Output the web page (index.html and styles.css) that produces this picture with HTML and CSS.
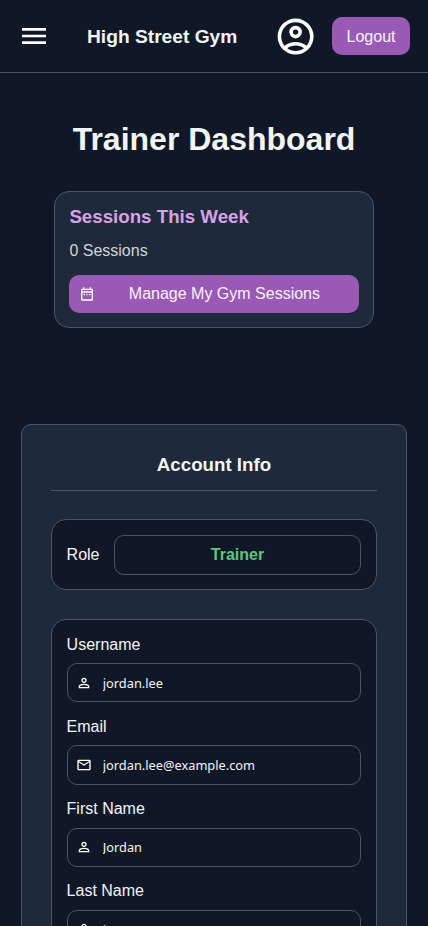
FILE: index.html
```html
<!DOCTYPE html>
<html lang="en">
<head>
<meta charset="utf-8">
<title>High Street Gym</title>
<link rel="stylesheet" href="styles.css">
</head>
<body>
<svg class="sprite" aria-hidden="true">
  <symbol id="person" viewBox="0 -960 960 960"><path d="M480-480q-66 0-113-47t-47-113q0-66 47-113t113-47q66 0 113 47t47 113q0 66-47 113t-113 47ZM160-160v-112q0-34 17.500-62.500T224-378q62-31 126-46.500T480-440q66 0 130 15.500T736-378q29 15 46.500 43.500T800-272v112H160Zm80-80h480v-32q0-11-5.500-20T700-306q-54-27-109-40.500T480-360q-56 0-111 13.500T260-306q-9 5-14.500 14t-5.500 20v32Zm240-320q33 0 56.500-23.500T560-640q0-33-23.500-56.500T480-720q-33 0-56.500 23.500T400-640q0 33 23.500 56.500T480-560Z"/></symbol>
</svg>
<header class="topbar">
  <svg class="menu-icon" viewBox="0 -960 960 960"><path d="M120-240v-80h720v80H120Zm0-200v-80h720v80H120Zm0-200v-80h720v80H120Z"/></svg>
  <div class="brand">High Street Gym</div>
  <svg class="account-icon" viewBox="0 -960 960 960"><path d="M234-276q51-39 114-61.500T480-360q69 0 132 22.500T726-276q35-41 54.500-93T800-480q0-133-93.500-226.500T480-800q-133 0-226.500 93.500T160-480q0 59 19.500 111t54.500 93Zm246-164q-59 0-99.500-40.500T340-580q0-59 40.500-99.500T480-720q59 0 99.500 40.500T620-580q0 59-40.500 99.500T480-440Zm0 360q-83 0-156-31.500T197-197q-54-54-85.500-127T80-480q0-83 31.500-156T197-763q54-54 127-85.500T480-880q83 0 156 31.500T763-763q54 54 85.500 127T880-480q0 83-31.500 156T763-197q-54 54-127 85.500T480-80Zm0-80q53 0 100-15.500t86-44.500q-39-29-86-44.500T480-280q-53 0-100 15.500T294-220q39 29 86 44.500T480-160Zm0-360q26 0 43-17t17-43q0-26-17-43t-43-17q-26 0-43 17t-17 43q0 26 17 43t43 17Z"/></svg>
  <button class="logout">Logout</button>
</header>
<main>
  <h1>Trainer Dashboard</h1>
  <section class="sessions">
    <h2>Sessions This Week</h2>
    <p>0 Sessions</p>
    <button class="manage">
      <svg class="icon" viewBox="0 -960 960 960"><path d="M200-80q-33 0-56.500-23.500T120-160v-560q0-33 23.500-56.500T200-800h40v-80h80v80h320v-80h80v80h40q33 0 56.500 23.500T840-720v560q0 33-23.500 56.500T760-80H200Zm0-80h560v-400H200v400Zm0-480h560v-80H200v80Zm80 240v-80h80v80h-80Zm160 0v-80h80v80h-80Zm160 0v-80h80v80h-80Z"/></svg>
      <span>Manage My Gym Sessions</span>
    </button>
  </section>
  <section class="account">
    <h2>Account Info</h2>
    <div class="role"><span>Role</span><div class="role-value">Trainer</div></div>
    <form class="details">
      <label>Username</label>
      <div class="field"><svg class="icon"><use href="#person"/></svg><span>jordan.lee</span></div>
      <label>Email</label>
      <div class="field"><svg class="icon" viewBox="0 -960 960 960"><path d="M160-160q-33 0-56.500-23.500T80-240v-480q0-33 23.500-56.500T160-800h640q33 0 56.500 23.500T880-720v480q0 33-23.500 56.500T800-160H160Zm320-280L160-640v400h640v-400L480-440Zm0-80 320-200H160l320 200ZM160-640v-80 480-400Z"/></svg><span>jordan.lee@example.com</span></div>
      <label>First Name</label>
      <div class="field"><svg class="icon"><use href="#person"/></svg><span>Jordan</span></div>
      <label>Last Name</label>
      <div class="field"><svg class="icon"><use href="#person"/></svg><span>Lee</span></div>
    </form>
  </section>
</main>
</body>
</html>
```
FILE: styles.css
```css
* { box-sizing: border-box; margin: 0; padding: 0; }
body {
  height: 926px;
  overflow: hidden;
  background: #101828;
  color: #f3f4f6;
  font: 16px/18px "Liberation Sans", Arial, sans-serif;
}
svg { fill: #fff; flex: none; }
.sprite { display: none; }
.topbar {
  display: flex;
  align-items: center;
  height: 73px;
  padding: 0 18px;
  border-bottom: 1px solid #4a5565;
}
.menu-icon { width: 32px; height: 32px; }
.brand { margin-left: 37px; width: 187px; padding-top: 2px; font-size: 19.2px; line-height: 22px; font-weight: 700; }
.account-icon { width: 43.2px; height: 43.2px; margin-top: 0.8px; }
button { border: 0; border-radius: 10px; background: #9b59b6; color: #f3f4f6; font: inherit; }
.logout { width: 78px; height: 38px; margin-left: auto; padding-top: 1px; }
h1 { margin-top: 48px; font-size: 32px; line-height: 37px; text-align: center; }
h2 { font-size: 18.72px; line-height: 22px; }
.sessions {
  width: 320px;
  height: 137px;
  margin: 33px auto 0;
  padding: 14px;
  border: 1px solid #4a5565;
  border-radius: 15px;
  background: #1e2939;
}
.sessions h2 { padding-left: 0.4px; color: #d7a1e8; }
.sessions p { margin: 14px 0 15px; padding-left: 0.4px; color: #d1d5db; }
.manage { display: flex; align-items: center; width: 100%; height: 38px; padding: 0 10px; }
.manage span { flex: 1; margin-left: 4.8px; text-align: center; }
.icon { width: 16px; height: 16px; }
.account {
  width: 386px;
  margin: 96px auto 0;
  padding: 29px;
  border: 1px solid #4a5565;
  border-radius: 10px;
  background: #1e2939;
}
.account h2 { padding-bottom: 14px; border-bottom: 1px solid #4a5565; text-align: center; }
.role, .details { border: 1px solid #4a5565; border-radius: 15px; background: #101828; }
.role { display: flex; align-items: center; gap: 14.4px; height: 71px; margin-top: 28px; padding: 15px 15px 15px 14.6px; }
.role-value, .field { border: 1px solid #4a5565; border-radius: 10px; }
.role-value { flex: 1; height: 40px; line-height: 38px; text-align: center; color: #5bc77c; font-weight: 700; }
.details { margin-top: 29px; padding: 15.8px 15px 16px 14.6px; }
label { display: block; margin-bottom: 9.4px; }
.field {
  display: flex;
  align-items: center;
  gap: 11.2px;
  height: 39.2px;
  margin-bottom: 15.6px;
  padding: 0 8px;
  font: 12.8px/18px "Noto Sans", sans-serif;
}
.field span { overflow: hidden; }
```
